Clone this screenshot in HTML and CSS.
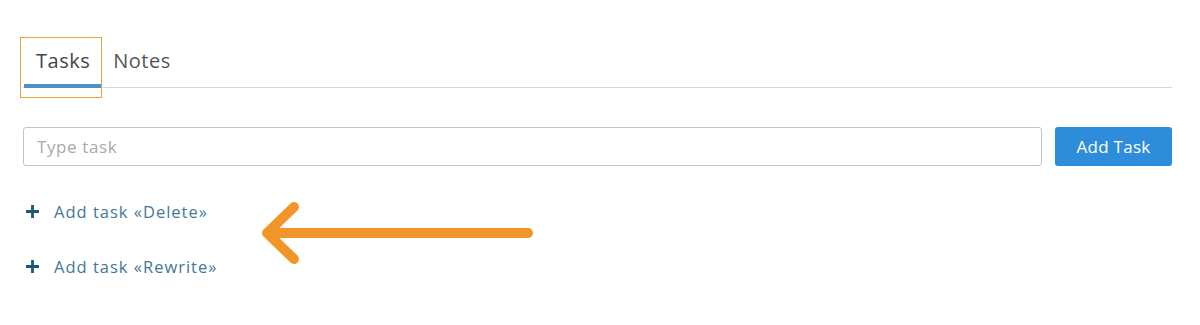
FILE: index.html
```html
<!DOCTYPE html>
<html>
<head>
  <meta charset="UTF-8">
  <title>Tasks</title>
  <link rel="stylesheet" href="styles.css">
</head>
<body>
<div class="container">
  <ul class="tabs">
    <li class="tab active">Tasks</li>
    <li class="tab">Notes</li>
  </ul>
  <div class="highlight"></div>
  <div class="task-form">
    <input type="text" class="task-input" placeholder="Type task">
    <button class="add-btn">Add Task</button>
  </div>
  <ul class="suggestions">
    <li class="suggestion">
      <svg class="plus" width="15" height="15" viewBox="0 0 15 15"><path d="M7.5 1v13M1 7.5h13" stroke="#1d5777" stroke-width="2.8" fill="none"/></svg>
      <span>Add task «Delete»</span>
    </li>
    <li class="suggestion">
      <svg class="plus" width="15" height="15" viewBox="0 0 15 15"><path d="M7.5 1v13M1 7.5h13" stroke="#1d5777" stroke-width="2.8" fill="none"/></svg>
      <span>Add task «Rewrite»</span>
    </li>
  </ul>
  <svg class="arrow" width="290" height="70" viewBox="0 0 290 70">
    <path d="M14 34H275M41 8L14 34L41 60" stroke="#f29528" stroke-width="10" stroke-linecap="round" stroke-linejoin="round" fill="none"/>
  </svg>
</div>
</body>
</html>
```

FILE: styles.css
```css
body {
  margin: 0;
  background: #fff;
  font-family: "Open Sans", "Noto Sans", sans-serif;
}
.container {
  position: relative;
  width: 1149px;
  padding-left: 23px;
  padding-top: 38px;
}
.tabs {
  list-style: none;
  margin: 0;
  padding: 0 0 0 1px;
  display: flex;
  border-bottom: 1px solid #d6d6d6;
}
.tab {
  font-size: 20px;
  line-height: 24px;
  letter-spacing: 0.5px;
  color: #555;
  padding: 11px 12px;
  border-bottom: 4px solid transparent;
  margin-bottom: -1px;
}
.tab.active {
  color: #444;
  padding-right: 11px;
  border-bottom-color: #4a90c9;
}
.highlight {
  position: absolute;
  left: 20px;
  top: 37px;
  width: 80px;
  height: 59px;
  border: 1.5px solid #e9a43f;
}
.task-form {
  display: flex;
  gap: 13px;
  margin-top: 39px;
}
.task-input {
  flex: 1;
  height: 39px;
  box-sizing: border-box;
  border: 1px solid #c4c4c4;
  border-radius: 3px;
  padding: 0 13px;
  font-family: inherit;
  font-size: 17px;
  letter-spacing: 0.6px;
  color: #444;
  outline: none;
}
.task-input::placeholder {
  color: #a9a9a9;
}
.add-btn {
  width: 117px;
  height: 39px;
  border: none;
  border-radius: 3px;
  background: #2e8ddb;
  color: #fff;
  font-family: inherit;
  font-size: 17px;
  letter-spacing: 0.3px;
}
.suggestions {
  list-style: none;
  margin: 35px 0 0;
  padding: 0 0 0 2px;
}
.suggestion {
  display: flex;
  align-items: center;
  gap: 14px;
  height: 20px;
  margin-bottom: 35px;
  font-size: 16.5px;
  letter-spacing: 1px;
  color: #457797;
}
.arrow {
  position: absolute;
  left: 253px;
  top: 199px;
}
```
